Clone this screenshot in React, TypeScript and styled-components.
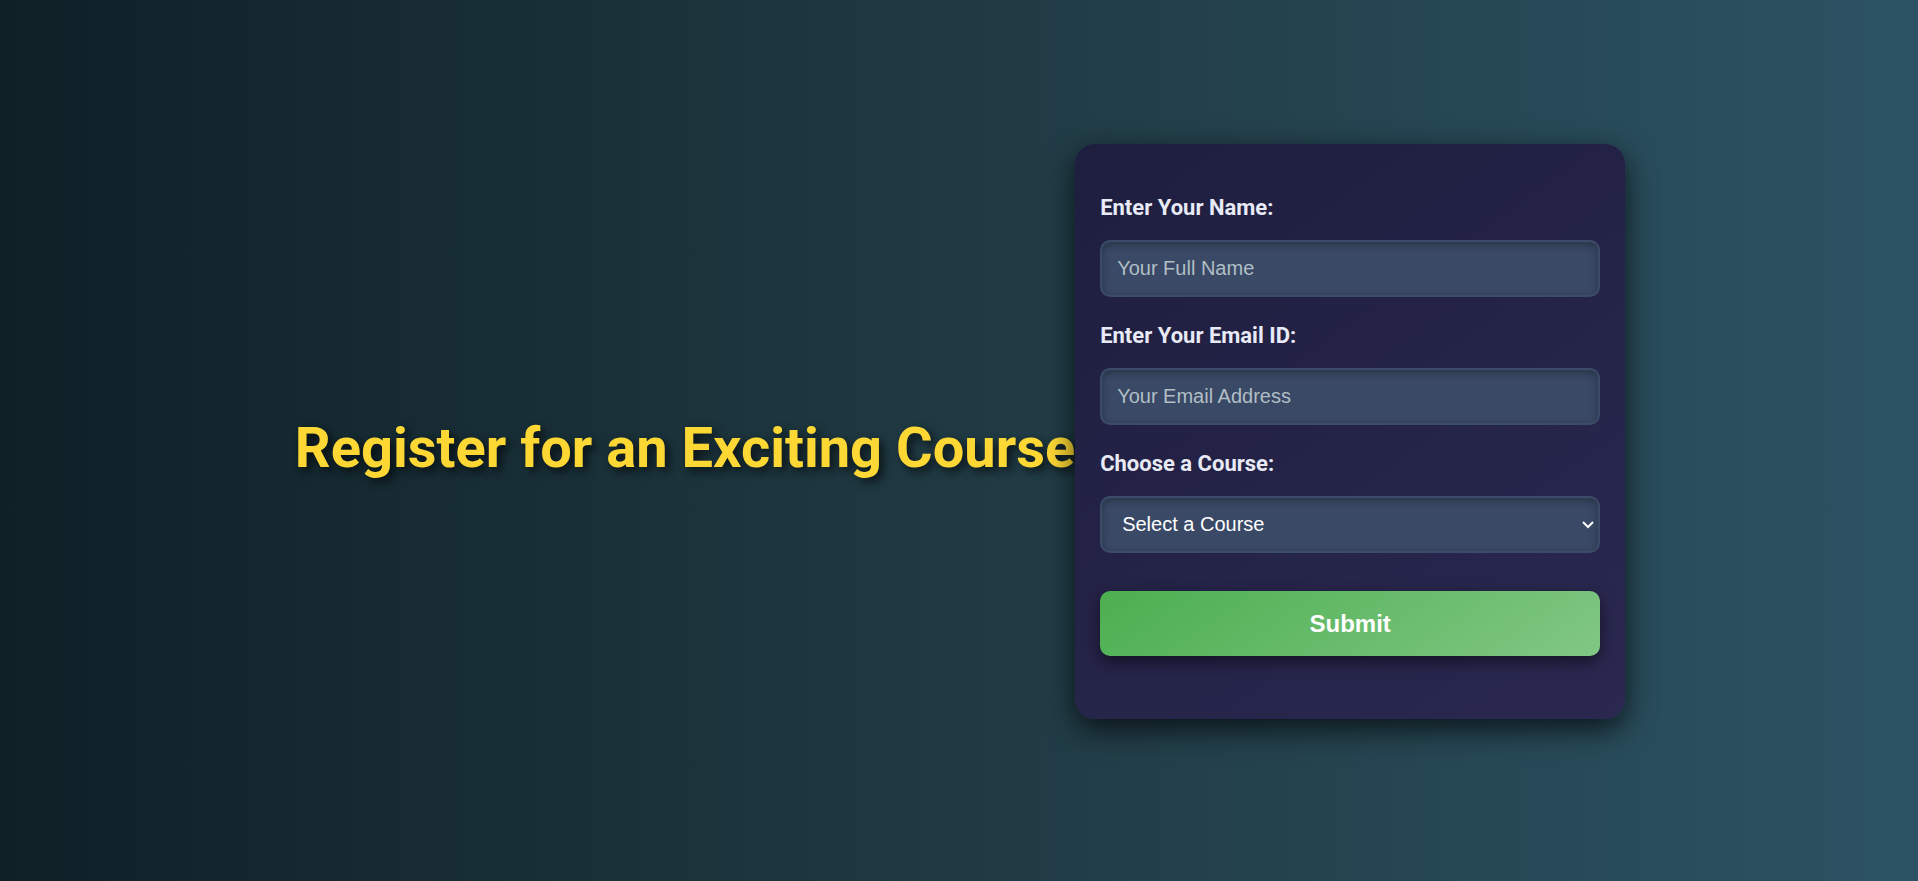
import React from "react";
import styled, { createGlobalStyle, css } from "styled-components";

const GlobalStyle = createGlobalStyle`
  * { box-sizing: border-box; }
  body {
    margin: 0;
    font-family: Roboto, sans-serif;
    background: linear-gradient(to right, #0f2027, #203a43, #2c5364);
  }
`;

const Page = styled.main`
  display: flex;
  justify-content: center;
  align-items: center;
  min-height: 100vh;
  padding: 0 0 18px 2px;
`;

const Title = styled.h1`
  margin: 32px 0 0;
  font-size: 56px;
  line-height: 66px;
  font-weight: 700;
  color: #fdd835;
  text-shadow: 4px 4px 10px rgba(0, 0, 0, 0.7);
`;

const Card = styled.form`
  display: flex;
  flex-direction: column;
  width: 550px;
  padding: 50px 25px 63px;
  border-radius: 20px;
  background: linear-gradient(145deg, #1e1e3f, #2a2850);
  box-shadow: 0 10px 30px rgba(0, 0, 0, 0.7);
`;

const Label = styled.label`
  margin-bottom: 19px;
  font-size: 22px;
  line-height: 27px;
  font-weight: 700;
  color: #e8eaf6;
`;

const control = css`
  width: 100%;
  height: 57px;
  border: 2px solid #3b4b69;
  border-radius: 10px;
  background: #3a4966;
  box-shadow: inset 0 3px 8px rgba(0, 0, 0, 0.3);
  color: #fff;
  font-family: "Liberation Sans", Arial, sans-serif;
  font-size: 20px;
`;

const Input = styled.input`
  ${control}
  margin-bottom: 25px;
  padding: 0 15px;
  &::placeholder { color: #b0bec5; }
`;

const SelectBox = styled.div`
  position: relative;
  margin-bottom: 38px;
`;

const Select = styled.select`
  ${control}
  display: block;
  padding: 0 20px 2px;
  appearance: none;
`;

const Chevron = styled.svg`
  position: absolute;
  top: 24px;
  right: 5px;
  width: 14px;
  height: 9px;
  pointer-events: none;
`;

const Submit = styled.button`
  width: 100%;
  height: 65px;
  border: none;
  border-radius: 10px;
  background: linear-gradient(145deg, #4caf50, #81c784);
  box-shadow: 0 6px 15px rgba(0, 0, 0, 0.5);
  color: #fff;
  font-family: "Liberation Sans", Arial, sans-serif;
  font-size: 24px;
  font-weight: 700;
`;

export default function App() {
  return (
    <>
      <GlobalStyle />
      <Page>
        <Title>Register for an Exciting Course</Title>
        <Card>
          <Label htmlFor="name">Enter Your Name:</Label>
          <Input id="name" type="text" placeholder="Your Full Name" />
          <Label htmlFor="email">Enter Your Email ID:</Label>
          <Input id="email" type="email" placeholder="Your Email Address" />
          <Label htmlFor="course">Choose a Course:</Label>
          <SelectBox>
            <Select id="course" defaultValue="">
              <option value="">Select a Course</option>
            </Select>
            <Chevron viewBox="0 0 14 9" aria-hidden="true">
              <path d="M2 2 L7 7 L12 2" fill="none" stroke="#fff" strokeWidth="2" />
            </Chevron>
          </SelectBox>
          <Submit type="submit">Submit</Submit>
        </Card>
      </Page>
    </>
  );
}
